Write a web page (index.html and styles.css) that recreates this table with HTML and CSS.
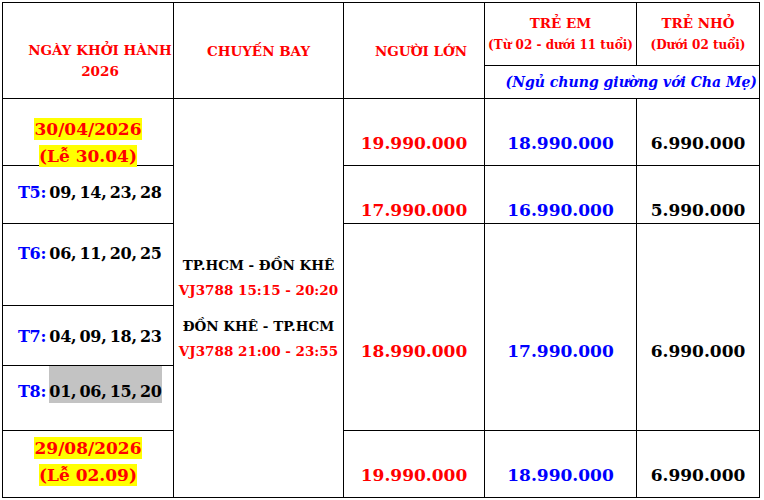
FILE: index.html
```html
<!DOCTYPE html>
<html lang="vi">
<head>
<meta charset="utf-8">
<title>Bảng giá tour Đồn Khê 2026</title>
<link rel="stylesheet" href="styles.css">
</head>
<body>
<table class="fare">
  <colgroup>
    <col class="c-date">
    <col class="c-flight">
    <col class="c-adult">
    <col class="c-child">
    <col class="c-infant">
  </colgroup>
  <tr class="r-h1">
    <td rowspan="2" class="h-date"><div class="red">NGÀY KHỞI HÀNH</div><div class="red">2026</div></td>
    <td rowspan="2" class="h-mid red">CHUYẾN BAY</td>
    <td rowspan="2" class="h-mid h-adult red">NGƯỜI LỚN</td>
    <td class="h-mid red"><div class="h-title">TRẺ EM</div><div class="h-sub">(Từ 02 - dưới 11 tuổi)</div></td>
    <td class="h-mid red"><div class="h-title">TRẺ NHỎ</div><div class="h-sub">(Dưới 02 tuổi)</div></td>
  </tr>
  <tr class="r-h2">
    <td colspan="2" class="h-note">(Ngủ chung giường với Cha Mẹ)</td>
  </tr>
  <tr class="r-1">
    <td class="d-holiday d-first"><div class="stack"><span class="hl-yellow">30/04/2026</span><br><span class="hl-yellow">(Lễ 30.04)</span></div></td>
    <td rowspan="6" class="flight">
      <div class="leg">
        <div class="route">TP.HCM - ĐỒN KHÊ</div>
        <div class="code">VJ3788 15:15 - 20:20</div>
      </div>
      <div class="leg">
        <div class="route">ĐỒN KHÊ - TP.HCM</div>
        <div class="code">VJ3788 21:00 - 23:55</div>
      </div>
    </td>
    <td class="price red">19.990.000</td>
    <td class="price blue">18.990.000</td>
    <td class="price">6.990.000</td>
  </tr>
  <tr class="r-2">
    <td class="d-day p-t5"><span class="blue">T5:</span> 09, 14, 23, 28</td>
    <td class="price red">17.990.000</td>
    <td class="price blue">16.990.000</td>
    <td class="price">5.990.000</td>
  </tr>
  <tr class="r-3">
    <td class="d-day p-t6"><span class="blue">T6:</span> 06, 11, 20, 25</td>
    <td rowspan="3" class="price price-tall red">18.990.000</td>
    <td rowspan="3" class="price price-tall blue">17.990.000</td>
    <td rowspan="3" class="price price-tall">6.990.000</td>
  </tr>
  <tr class="r-4">
    <td class="d-day p-t7"><span class="blue">T7:</span> 04, 09, 18, 23</td>
  </tr>
  <tr class="r-5">
    <td class="d-day p-t8"><span class="blue">T8:</span> <span class="hl-gray">01, 06, 15, 20</span></td>
  </tr>
  <tr class="r-6">
    <td class="d-holiday d-last"><div class="stack"><span class="hl-yellow">29/08/2026</span><br><span class="hl-yellow">(Lễ 02.09)</span></div></td>
    <td class="price red">19.990.000</td>
    <td class="price blue">18.990.000</td>
    <td class="price">6.990.000</td>
  </tr>
</table>
</body>
</html>
```

FILE: styles.css
```css
html, body {
  margin: 0;
  padding: 0;
  background: #ffffff;
}

.fare {
  border-collapse: collapse;
  table-layout: fixed;
  width: 758px;
  margin: 2px 0 0 2px;
  font-family: "DejaVu Serif", "Liberation Serif", serif;
  font-weight: bold;
  color: #000000;
}

.c-date { width: 171px; }
.c-flight { width: 170px; }
.c-adult { width: 141px; }
.c-child { width: 152px; }
.c-infant { width: 123px; }

.fare td {
  border: 1px solid #000000;
  padding: 0;
  text-align: center;
  vertical-align: top;
  white-space: nowrap;
}

.r-h1 { height: 63px; }
.r-h2 { height: 33px; }
.r-1 { height: 67px; }
.r-2 { height: 58px; }
.r-3 { height: 82px; }
.r-4 { height: 60px; }
.r-5 { height: 65px; }
.r-6 { height: 67px; }

.red { color: #ff0000; }
.blue { color: #0000ff; }

/* header */
.h-date {
  font-size: 13.5px;
  line-height: 21px;
  padding-top: 37px !important;
  padding-left: 24px !important;
}
.fare td.h-mid {
  vertical-align: middle;
  font-size: 13.5px;
}
.fare td.h-adult {
  padding-left: 14px;
}
.h-title {
  font-size: 13.5px;
  line-height: 22px;
}
.h-sub {
  font-size: 12px;
  line-height: 22px;
}
.fare td.h-note {
  vertical-align: middle;
  text-align: right;
  padding-right: 2px;
  font-size: 14px;
  font-style: italic;
  color: #0000ff;
}

/* dates */
.d-holiday {
  color: #ff0000;
  font-size: 17px;
  line-height: 27px;
}
.stack {
  height: 48px;
}
.fare td.d-first { padding-top: 17px; }
.fare td.d-last { padding-top: 4px; }

.hl-yellow {
  background: #ffff00;
  padding: 1px 0;
}

.fare td.d-day {
  text-align: left;
  padding-left: 15px;
  font-size: 16px;
  line-height: 22px;
  letter-spacing: -0.3px;
  word-spacing: -2px;
}
.fare td.p-t5 { padding-top: 16px; }
.fare td.p-t6 { padding-top: 19px; }
.fare td.p-t7 { padding-top: 20px; }
.fare td.p-t8 { padding-top: 0; }

.hl-gray {
  display: inline-block;
  background: #c3c3c3;
  padding-top: 15px;
  padding-bottom: 0;
  line-height: 22px;
}

/* flight */
.fare td.flight {
  padding-top: 154px;
  font-size: 13.5px;
  line-height: 25px;
}
.leg + .leg {
  margin-top: 11px;
}
.code {
  color: #ff0000;
}

/* prices */
.fare td.price {
  font-size: 17px;
  line-height: 22px;
  padding-top: 33px;
}
.fare td.price-tall {
  padding-top: 116px;
}
```
